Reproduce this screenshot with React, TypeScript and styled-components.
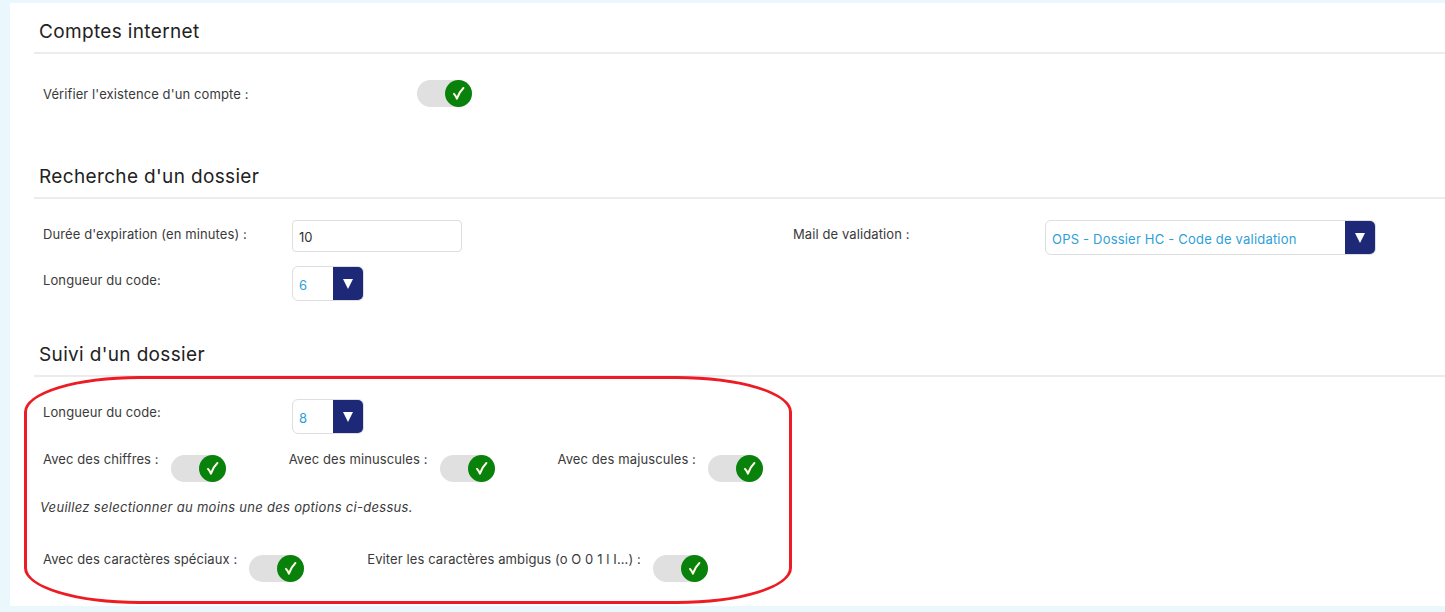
import { ReactNode } from 'react'
import styled, { createGlobalStyle } from 'styled-components'

const GlobalStyle = createGlobalStyle`
  html, body {
    margin: 0;
    padding: 0;
    background: #eaf7fd;
    font-family: Inter, 'Noto Sans', 'Liberation Sans', sans-serif;
    color: #3a3a3a;
  }
`

const Panel = styled.div`
  margin: 3px 0 0 10px;
  height: 603px;
  box-sizing: border-box;
  background: #fff;
  padding: 17px 0 0 24px;
`

const Section = styled.section<{ $gap?: number }>`
  position: relative;
  margin-bottom: ${(p) => p.$gap ?? 0}px;
`

const Title = styled.h2`
  margin: 0;
  padding: 0 0 8px 5px;
  font-size: 19px;
  line-height: 24px;
  font-weight: 400;
  letter-spacing: 0.35px;
  color: #222;
  border-bottom: 2px solid #ececec;
`

const Body = styled.div<{ $top: number }>`
  padding: ${(p) => p.$top}px 0 0 9px;
  display: flex;
  flex-direction: column;
`

const Row = styled.div<{ $mt?: number; $center?: boolean }>`
  display: flex;
  align-items: ${(p) => (p.$center ? 'center' : 'flex-start')};
  margin-top: ${(p) => p.$mt ?? 0}px;
`

const Column = styled.div<{ $width?: number }>`
  display: flex;
  align-items: flex-start;
  width: ${(p) => (p.$width ? `${p.$width}px` : 'auto')};
`

const Label = styled.label<{ $width?: number; $pt?: number }>`
  display: block;
  font-size: 13px;
  line-height: 16px;
  letter-spacing: 0.1px;
  color: #3a3a3a;
  padding-top: ${(p) => p.$pt ?? 0}px;
  width: ${(p) => (p.$width ? `${p.$width}px` : 'auto')};
  flex-shrink: 0;
`

const TextInput = styled.input`
  box-sizing: border-box;
  width: 170px;
  height: 32px;
  border: 1px solid #dedede;
  border-radius: 4px;
  padding: 2px 6px 0;
  font: inherit;
  font-size: 13px;
  color: #333;
  outline: none;
`

const SelectBox = styled.div<{ $width: number }>`
  box-sizing: border-box;
  display: flex;
  width: ${(p) => p.$width}px;
  height: 35px;
  border: 1px solid #dedede;
  border-radius: 6px;
  overflow: hidden;
  background: #fff;
`

const SelectValue = styled.span`
  flex: 1;
  display: flex;
  align-items: center;
  padding: 3px 0 0 6px;
  font-size: 13px;
  letter-spacing: 0.2px;
  color: #2e9fd8;
  white-space: nowrap;
`

const SelectButton = styled.span`
  width: 30px;
  background: #1d2877;
  display: flex;
  align-items: center;
  justify-content: center;
  &::after {
    content: '';
    border-left: 5.5px solid transparent;
    border-right: 5.5px solid transparent;
    border-top: 10px solid #fff;
  }
`

const Track = styled.span<{ $mt?: number }>`
  display: inline-flex;
  justify-content: flex-end;
  width: 55px;
  height: 27px;
  border-radius: 14px;
  background: #e0e0e0;
  margin-top: ${(p) => p.$mt ?? 0}px;
  flex-shrink: 0;
`

const Knob = styled.span`
  width: 27px;
  height: 27px;
  border-radius: 50%;
  background: #08820a;
  display: flex;
  align-items: center;
  justify-content: center;
`

const Option = styled.div`
  display: flex;
  align-items: flex-start;
  gap: 12px;
`

const OptionRow = styled.div<{ $mt: number }>`
  display: flex;
  align-items: flex-start;
  gap: 63px;
  margin-top: ${(p) => p.$mt}px;
`

const Hint = styled.p`
  margin: 17px 0 0 -3px;
  font-size: 13px;
  line-height: 16px;
  letter-spacing: 0.3px;
  font-style: italic;
  color: #3a3a3a;
`

const Annotation = styled.div`
  position: absolute;
  left: -10px;
  top: 33px;
  width: 768px;
  height: 228px;
  box-sizing: border-box;
  border: 3.5px solid #ed1c24;
  border-radius: 115px / 36px;
  pointer-events: none;
`

const Toggle = ({ mt }: { mt?: number }) => (
  <Track $mt={mt}>
    <Knob>
      <svg width="17" height="17" viewBox="0 0 16 16">
        <path
          d="M3.8 8.4 C5 9.4 5.8 10.9 6.5 12.8 C7.9 8.6 10 5.3 12.6 2.8"
          fill="none"
          stroke="#fffbe8"
          strokeWidth="1.9"
          strokeLinecap="round"
          strokeLinejoin="round"
        />
      </svg>
    </Knob>
  </Track>
)

const Select = ({ width, value }: { width: number; value: string }) => (
  <SelectBox $width={width}>
    <SelectValue>{value}</SelectValue>
    <SelectButton />
  </SelectBox>
)

const ToggleOption = ({ label }: { label: ReactNode }) => (
  <Option>
    <Label>{label}</Label>
    <Toggle mt={4} />
  </Option>
)

export default function App() {
  return (
    <>
      <GlobalStyle />
      <Panel>
        <Section $gap={58}>
          <Title>Comptes internet</Title>
          <Body $top={26}>
            <Row $center>
              <Label $width={374}>Vérifier l'existence d'un compte :</Label>
              <Toggle />
            </Row>
          </Body>
        </Section>

        <Section $gap={42}>
          <Title>Recherche d'un dossier</Title>
          <Body $top={21}>
            <Row>
              <Column $width={750}>
                <Label $width={249} $pt={6}>
                  Durée d'expiration (en minutes) :
                </Label>
                <TextInput defaultValue="10" />
              </Column>
              <Column>
                <Label $width={252} $pt={6}>
                  Mail de validation :
                </Label>
                <Select width={331} value="OPS - Dossier HC - Code de validation" />
              </Column>
            </Row>
            <Row $mt={11}>
              <Label $width={249} $pt={6}>
                Longueur du code:
              </Label>
              <Select width={72} value="6" />
            </Row>
          </Body>
        </Section>

        <Section>
          <Title>Suivi d'un dossier</Title>
          <Body $top={22}>
            <Row>
              <Label $width={249} $pt={5}>
                Longueur du code:
              </Label>
              <Select width={72} value="8" />
            </Row>
            <OptionRow $mt={17}>
              <ToggleOption label="Avec des chiffres :" />
              <ToggleOption label="Avec des minuscules :" />
              <ToggleOption label="Avec des majuscules :" />
            </OptionRow>
            <Hint>Veuillez selectionner au moins une des options ci-dessus.</Hint>
            <OptionRow $mt={36}>
              <ToggleOption label="Avec des caractères spéciaux :" />
              <ToggleOption label="Eviter les caractères ambigus (o O 0 1 l I...) :" />
            </OptionRow>
          </Body>
          <Annotation />
        </Section>
      </Panel>
    </>
  )
}
